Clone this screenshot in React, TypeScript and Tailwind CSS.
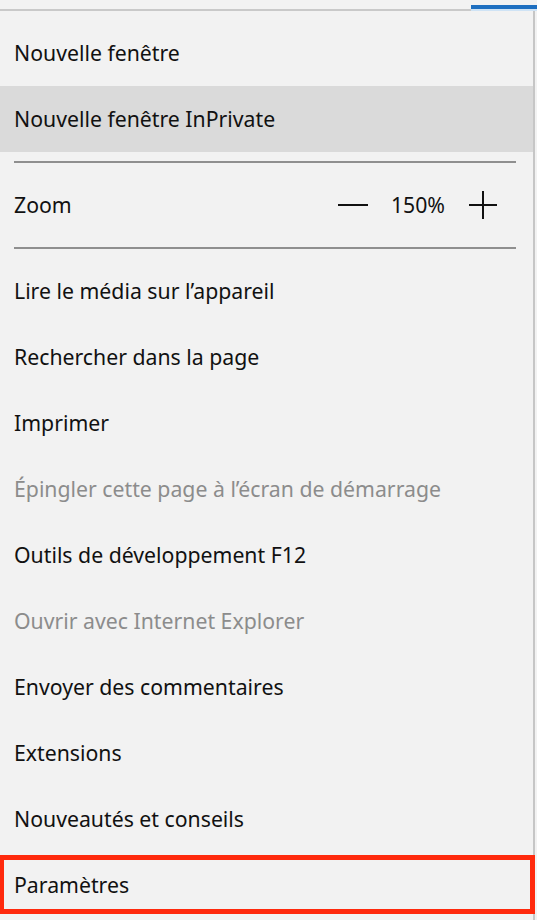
const ITEMS_TOP = [
  { label: 'Nouvelle fenêtre' },
  { label: 'Nouvelle fenêtre InPrivate', hover: true },
]

const ITEMS_BOTTOM = [
  { label: 'Lire le média sur l’appareil' },
  { label: 'Rechercher dans la page' },
  { label: 'Imprimer' },
  { label: 'Épingler cette page à l’écran de démarrage', disabled: true },
  { label: 'Outils de développement F12' },
  { label: 'Ouvrir avec Internet Explorer', disabled: true },
  { label: 'Envoyer des commentaires' },
  { label: 'Extensions' },
  { label: 'Nouveautés et conseils' },
]

function MenuItem({ label, hover, disabled }: { label: string; hover?: boolean; disabled?: boolean }) {
  return (
    <div
      className={[
        'h-[66px] flex items-center px-[14px] text-[21.25px]',
        hover ? 'bg-[#dadada]' : '',
        disabled ? 'text-[#8c8c8c]' : 'text-[#111]',
      ].join(' ')}
    >
      {label}
    </div>
  )
}

function Separator() {
  return <div className="ml-[14px] mr-[17px] my-[9px] h-[2px] bg-[#8f8f8f]" />
}

export default function App() {
  return (
    <div
      className="w-[537px] h-[920px] bg-[#f2f2f2] overflow-hidden flex flex-col"
      style={{ fontFamily: '"Noto Sans", "Open Sans", sans-serif' }}
    >
      {/* top edge with tab indicator */}
      <div className="h-[11px] flex">
        <div className="flex-1 flex flex-col justify-end">
          <div className="h-[2px] bg-[#c9c9c9]" />
        </div>
        <div className="w-[66px] flex flex-col">
          <div className="h-[5px]" />
          <div className="h-[4px] bg-[#1e6fc0]" />
          <div className="h-[2px] bg-[#cfe3f5]" />
        </div>
      </div>

      <div className="flex-1 flex flex-col w-[535px] border-r-2 border-[#c6c6c6] pt-[9px]">
        {ITEMS_TOP.map((it) => (
          <MenuItem key={it.label} {...it} />
        ))}
        <Separator />

        {/* Zoom row */}
        <div className="h-[66px] flex items-center justify-between px-[14px] text-[21.25px] text-[#111]">
          <span>Zoom</span>
          <div className="flex items-center mr-[21px]">
            <div className="w-[30px] h-[2px] bg-[#111]" />
            <span className="ml-[23px] mr-[23px]">150%</span>
            <svg width="30" height="30" viewBox="0 0 30 30">
              <path d="M15 1v28M1 15h28" stroke="#111" strokeWidth="2" />
            </svg>
          </div>
        </div>

        <Separator />

        {ITEMS_BOTTOM.map((it) => (
          <MenuItem key={it.label} {...it} />
        ))}

        <div className="relative">
          <MenuItem label="Paramètres" />
          <div className="absolute left-[-1px] right-[-2px] top-[3px] bottom-[4px] border-[5px] border-[#ff2a0d]" />
        </div>
      </div>
    </div>
  )
}
